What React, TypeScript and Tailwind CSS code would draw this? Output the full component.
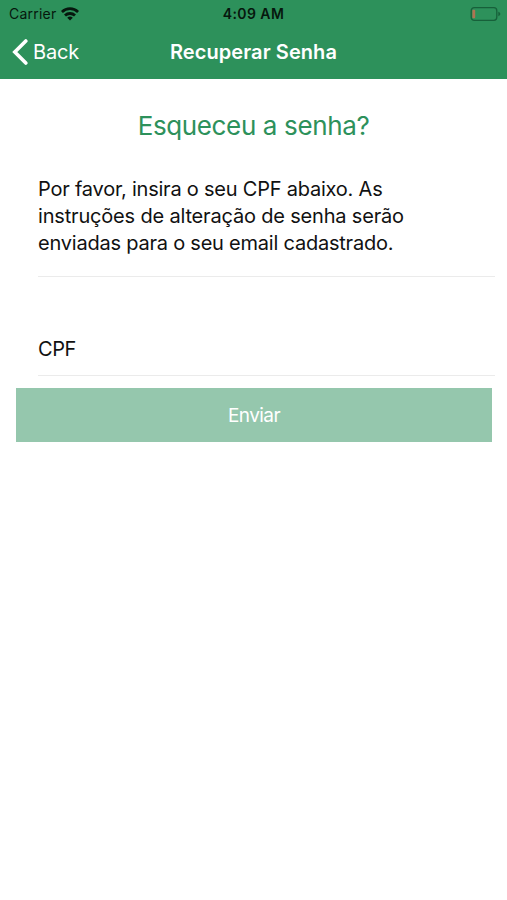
import React, { useState } from 'react';

const StatusBar = () => (
  <div className="grid grid-cols-[1fr_auto_1fr] items-center h-[27px] text-[#06170d]">
    <div className="flex items-center gap-[5px] pl-[9px]">
      <span className="text-[14px] leading-none tracking-[0.015em]">Carrier</span>
      <svg className="w-[18px] h-[14px]" viewBox="0 0 18 14" fill="none" stroke="currentColor" strokeWidth="2.8">
        <path d="M0.9 5a11.6 11.6 0 0 1 16.2 0" />
        <path d="M4 8.5a7.2 7.2 0 0 1 10 0" />
        <path d="M9 13.6l-2.8-2.8a4.2 4.2 0 0 1 5.6 0z" fill="currentColor" stroke="none" />
      </svg>
    </div>
    <span className="text-center text-[14px] leading-none font-semibold tracking-[0.03em]">4:09 AM</span>
    <svg className="justify-self-end w-[31px] h-[14px] mr-1.5" viewBox="0 0 31 14" fill="none">
      <rect x="1.2" y="0.7" width="25.6" height="12.6" rx="3" stroke="#17603a" strokeWidth="1.3" />
      <rect x="2.4" y="2.8" width="2.8" height="8.4" rx="1" fill="#b07352" />
      <path d="M28.3 4.8c1.2.4 2 1.2 2 2.2s-.8 1.8-2 2.2z" fill="#17603a" />
    </svg>
  </div>
);

const App = () => {
  const [cpf, setCpf] = useState('');

  return (
    <div className="min-h-screen bg-white font-['Inter',sans-serif] text-[#111111]">
      <header className="h-[79px] bg-[#2d915b]">
        <StatusBar />
        <div className="grid grid-cols-[1fr_auto_1fr] items-center h-[50px]">
          <button className="flex items-center gap-[5px] pl-3 text-white">
            <svg className="w-4 h-[26px]" viewBox="0 0 16 26" fill="none" stroke="currentColor" strokeWidth="3.6" strokeLinecap="round" strokeLinejoin="miter">
              <path d="M13.8 2L2.8 13l11 11" />
            </svg>
            <span className="text-[20px] leading-none tracking-[-0.01em]">Back</span>
          </button>
          <h1 className="text-[20px] leading-none font-semibold tracking-[0.004em] text-white">Recuperar Senha</h1>
        </div>
      </header>

      <main>
        <h2 className="pt-8 text-center text-[26px] leading-[30px] tracking-[-0.014em] text-[#2d915b]">Esqueceu a senha?</h2>

        <p className="ml-[38px] mr-3 mt-[35px] pb-[19px] border-b border-[#ebebeb] text-[20px] leading-[27px] tracking-[-0.011em]">
          Por favor, insira o seu CPF abaixo. As<br />
          <span className="tracking-[-0.009em]">instruções de alteração de senha serão</span><br />
          enviadas para o seu email cadastrado.
        </p>

        <div className="flex items-center ml-[38px] mr-3 mt-[43px] h-[56px] pt-0.5 border-b border-[#ebebeb]">
          <label htmlFor="cpf" className="text-[20px] leading-none tracking-[-0.02em]">CPF</label>
          <input
            id="cpf"
            type="text"
            value={cpf}
            onChange={(e) => setCpf(e.target.value)}
            className="flex-1 ml-4 text-[20px] focus:outline-none"
          />
        </div>

        <button
          disabled={!cpf}
          className="flex items-center justify-center w-[476px] h-[54px] ml-4 mt-3 pt-0.5 bg-[#2d915b] text-[19px] tracking-[-0.03em] text-white disabled:bg-[#95c7ad]"
        >
          Enviar
        </button>
      </main>
    </div>
  );
};

export default App;
